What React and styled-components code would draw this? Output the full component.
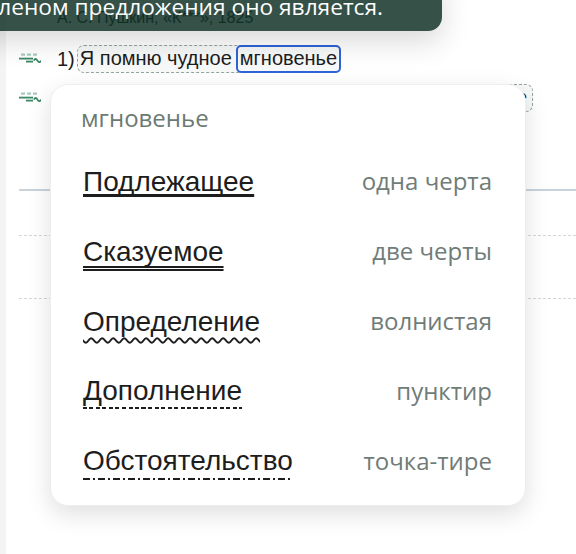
import React from "react";
import styled, { createGlobalStyle, css } from "styled-components";

const GlobalStyle = createGlobalStyle`
  html, body {
    margin: 0;
    padding: 0;
    background: #f3f4f4;
    overflow: hidden;
  }
  * {
    box-sizing: border-box;
  }
`;

const Page = styled.div`
  position: relative;
  width: 576px;
  height: 554px;
  padding-left: 6px;
  overflow: hidden;
  font-family: "Liberation Sans", Arial, sans-serif;
`;

const Card = styled.div`
  height: 100%;
  background: #ffffff;
  padding: 8px 0 0 13px;
`;

const Citation = styled.div`
  padding-left: 38px;
  font-size: 16px;
  line-height: 20px;
  color: #222;
`;

const Rows = styled.div`
  display: flex;
  flex-direction: column;
  gap: 11px;
  margin-top: 17px;
`;

const Row = styled.div`
  display: flex;
  align-items: center;
  gap: 16px;
  white-space: nowrap;
`;

const Line = styled.div`
  display: flex;
  align-items: center;
  gap: 2px;
  font-size: 20px;
  color: #1d1d1d;
`;

const Sentence = styled.div`
  display: flex;
  align-items: stretch;
  height: 28px;
  padding-left: 2px;
  padding-right: ${(p) => p.$trail || 0}px;
  border: 1px dashed #97a3a0;
  border-radius: 7px;
  background: #f7f9f9;
  line-height: 24px;
`;

const Word = styled.span`
  margin: -1px -1px -1px 4px;
  padding: 0 2px;
  border: 2px solid #2f63d8;
  border-radius: 5px;
  line-height: 22px;
`;

const Divider = styled.div`
  margin-top: 77px;
  height: 2px;
  background: #c9d3dc;
`;

const AnswerRow = styled.div`
  height: ${(p) => p.h}px;
  border-bottom: 1px dashed #d3d7d9;
`;

const Toast = styled.div`
  position: absolute;
  top: -23px;
  right: 134px;
  padding: 14px 59px 9px 24px;
  background: #0f3126;
  opacity: 0.84;
  border-radius: 0 0 14px 14px;
  box-shadow: 0 10px 28px rgba(0, 0, 0, 0.18);
  color: #ffffff;
  font-family: "Open Sans", "Noto Sans", sans-serif;
  font-size: 22.7px;
  line-height: 31px;
  white-space: nowrap;
`;

const Popup = styled.div`
  position: absolute;
  left: 50px;
  top: 84px;
  width: 476px;
  height: 422px;
  padding: 18px 33px 0 30px;
  background: #ffffff;
  border-radius: 18px;
  border: 1px solid #eeeeee;
  box-shadow: 0 8px 24px rgba(0, 0, 0, 0.13);
`;

const PopupTitle = styled.div`
  height: 30px;
  margin-bottom: 14px;
  font-family: "Open Sans", "Noto Sans", sans-serif;
  font-size: 24px;
  line-height: 30px;
  color: #6c7a74;
`;

const Option = styled.div`
  display: flex;
  align-items: center;
  justify-content: space-between;
  height: 70px;
  padding-left: 2px;
`;

const marks = {
  solid: css`
    text-decoration: underline solid #1d1d1d 2.5px;
    text-underline-offset: 3px;
  `,
  double: css`
    text-decoration: underline double #1d1d1d 1.8px;
    text-underline-offset: 5px;
  `,
  wavy: css`
    text-decoration: underline wavy #1d1d1d 2px;
    text-underline-offset: 6px;
  `,
  dashed: css`
    padding-bottom: 2px;
    background: repeating-linear-gradient(
        to right,
        #1d1d1d 0 4px,
        transparent 4px 6.5px
      )
      left bottom / 100% 2px no-repeat;
  `,
  dashdot: css`
    padding-bottom: 3px;
    background: repeating-linear-gradient(
        to right,
        #1d1d1d 0 7px,
        transparent 7px 10px,
        #1d1d1d 10px 12px,
        transparent 12px 15px
      )
      left bottom / 100% 2px no-repeat;
  `,
};

const Label = styled.span`
  font-size: 28px;
  color: #1d1d1d;
  text-decoration-skip-ink: none;
  ${(p) => marks[p.kind]}
`;

const Hint = styled.span`
  margin-top: -3px;
  font-family: "Open Sans", "Noto Sans", sans-serif;
  font-size: 24px;
  color: #707c77;
`;

const RowIcon = () => (
  <svg width="22" height="12" viewBox="0 0 22 12">
    <g fill="#a4ccb9">
      <rect x="2" y="0.5" width="4" height="2.2" />
      <rect x="8" y="0.5" width="4" height="2.2" />
      <rect x="14" y="0.5" width="4" height="2.2" />
    </g>
    <g stroke="#3a8865" strokeWidth="1.8" fill="none">
      <line x1="0" y1="5.6" x2="14" y2="5.6" />
      <line x1="7" y1="8.6" x2="14" y2="8.6" />
      <path d="M14.8 7.6 q1.8 -3.2 3.6 0 t3.6 0" />
    </g>
  </svg>
);

const options = [
  { name: "Подлежащее", hint: "одна черта", kind: "solid" },
  { name: "Сказуемое", hint: "две черты", kind: "double" },
  { name: "Определение", hint: "волнистая", kind: "wavy" },
  { name: "Дополнение", hint: "пунктир", kind: "dashed" },
  { name: "Обстоятельство", hint: "точка-тире", kind: "dashdot" },
];

export default function App() {
  return (
    <>
      <GlobalStyle />
      <Page>
        <Card>
          <Citation>А. С. Пушкин, «К***», 1825</Citation>
          <Rows>
            <Row>
              <RowIcon />
              <Line>
                1)
                <Sentence>
                  Я помню чудное
                  <Word>мгновенье</Word>
                </Sentence>
              </Line>
            </Row>
            <Row>
              <RowIcon />
              <Line>
                2)
                <Sentence $trail={5}>
                  Передо мной явилась, как мимолётное виденье
                </Sentence>
              </Line>
            </Row>
          </Rows>
          <Divider />
          <AnswerRow h={45} />
          <AnswerRow h={63} />
        </Card>

        <Toast>Выберите, каким членом предложения оно является.</Toast>

        <Popup>
          <PopupTitle>мгновенье</PopupTitle>
          {options.map((o) => (
            <Option key={o.name}>
              <Label kind={o.kind}>{o.name}</Label>
              <Hint>{o.hint}</Hint>
            </Option>
          ))}
        </Popup>
      </Page>
    </>
  );
}
